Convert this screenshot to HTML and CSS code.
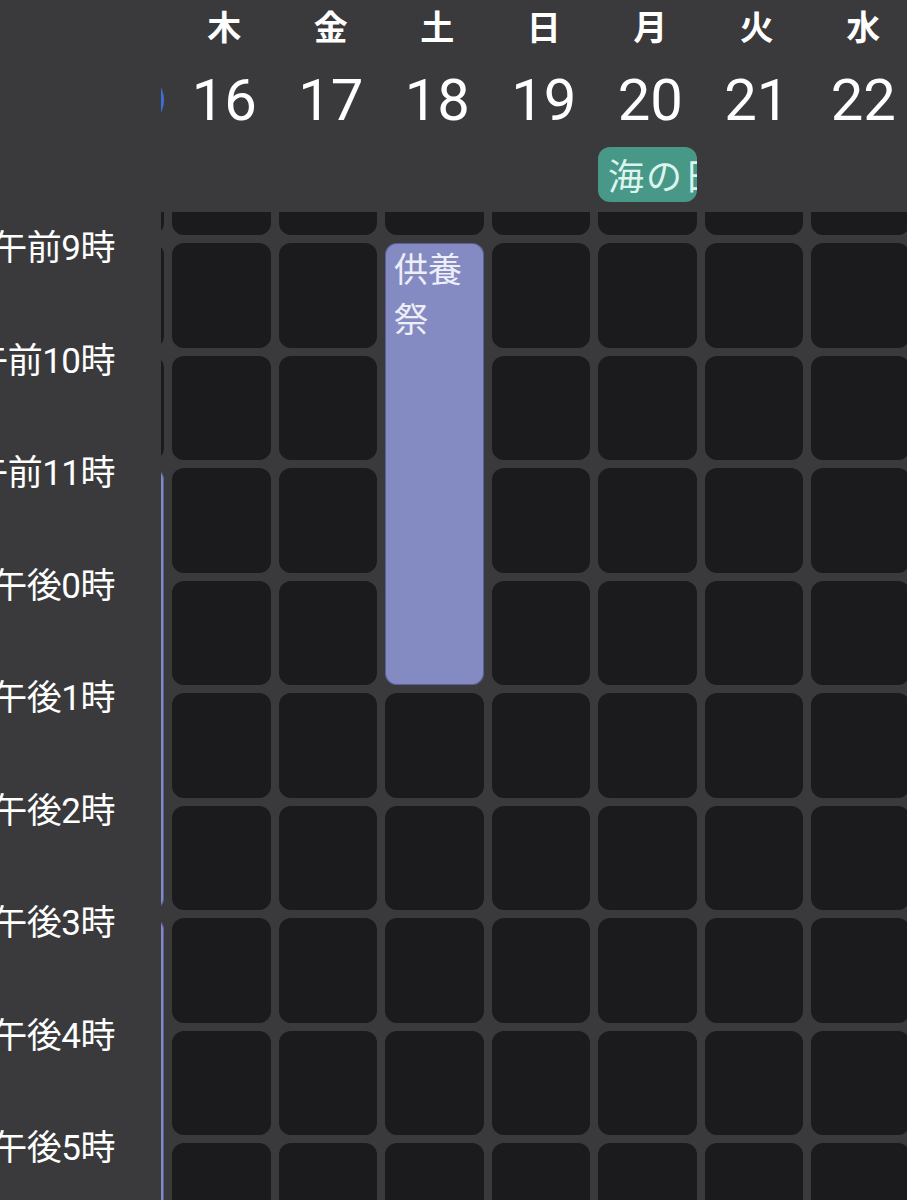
FILE: index.html
```html
<!DOCTYPE html>
<html lang="ja">
<head>
  <meta charset="UTF-8">
  <meta name="viewport" content="width=device-width, initial-scale=1.0">
  <title>週表示</title>
  <link rel="stylesheet" href="styles.css">
</head>
<body>
  <div class="cal">
    <div class="head">
      <div class="days">
        <!-- 15 (today) sits under the time gutter, only the pill edge shows -->
        <div class="day">
          <div class="dow"></div>
          <div class="date"><span class="today"></span></div>
          <div class="allday"></div>
        </div>
        <div class="day">
          <div class="dow">木</div>
          <div class="date">16</div>
          <div class="allday"></div>
        </div>
        <div class="day">
          <div class="dow">金</div>
          <div class="date">17</div>
          <div class="allday"></div>
        </div>
        <div class="day">
          <div class="dow">土</div>
          <div class="date">18</div>
          <div class="allday"></div>
        </div>
        <div class="day">
          <div class="dow">日</div>
          <div class="date">19</div>
          <div class="allday"></div>
        </div>
        <div class="day">
          <div class="dow">月</div>
          <div class="date">20</div>
          <div class="allday">
            <div class="holiday">海の日</div>
          </div>
        </div>
        <div class="day">
          <div class="dow">火</div>
          <div class="date">21</div>
          <div class="allday"></div>
        </div>
        <div class="day">
          <div class="dow">水</div>
          <div class="date">22</div>
          <div class="allday"></div>
        </div>
      </div>
      <div class="corner"></div>
    </div>

    <div class="body">
      <div class="grid">
        <!-- events first, slots flow around them -->
        <div class="event ev-kuyo">供養祭</div>
        <div class="event ev-a"></div>
        <div class="event ev-b"></div>

        <!-- 8時 -->
        <div class="slot"></div><div class="slot"></div><div class="slot"></div><div class="slot"></div>
        <div class="slot"></div><div class="slot"></div><div class="slot"></div><div class="slot"></div>
        <!-- 9時 -->
        <div class="slot"></div><div class="slot"></div><div class="slot"></div>
        <div class="slot"></div><div class="slot"></div><div class="slot"></div><div class="slot"></div>
        <!-- 10時 -->
        <div class="slot"></div><div class="slot"></div><div class="slot"></div>
        <div class="slot"></div><div class="slot"></div><div class="slot"></div><div class="slot"></div>
        <!-- 11時 -->
        <div class="slot"></div><div class="slot"></div>
        <div class="slot"></div><div class="slot"></div><div class="slot"></div><div class="slot"></div>
        <!-- 0時 -->
        <div class="slot"></div><div class="slot"></div>
        <div class="slot"></div><div class="slot"></div><div class="slot"></div><div class="slot"></div>
        <!-- 1時 -->
        <div class="slot"></div><div class="slot"></div><div class="slot"></div>
        <div class="slot"></div><div class="slot"></div><div class="slot"></div><div class="slot"></div>
        <!-- 2時 -->
        <div class="slot"></div><div class="slot"></div><div class="slot"></div>
        <div class="slot"></div><div class="slot"></div><div class="slot"></div><div class="slot"></div>
        <!-- 3時 -->
        <div class="slot"></div><div class="slot"></div><div class="slot"></div>
        <div class="slot"></div><div class="slot"></div><div class="slot"></div><div class="slot"></div>
        <!-- 4時 -->
        <div class="slot"></div><div class="slot"></div><div class="slot"></div>
        <div class="slot"></div><div class="slot"></div><div class="slot"></div><div class="slot"></div>
        <!-- 5時 -->
        <div class="slot"></div><div class="slot"></div><div class="slot"></div>
        <div class="slot"></div><div class="slot"></div><div class="slot"></div><div class="slot"></div>
      </div>

      <div class="times">
        <div class="times-list">
          <div class="time">午前9時</div>
          <div class="time">午前10時</div>
          <div class="time">午前11時</div>
          <div class="time">午後0時</div>
          <div class="time">午後1時</div>
          <div class="time">午後2時</div>
          <div class="time">午後3時</div>
          <div class="time">午後4時</div>
          <div class="time">午後5時</div>
        </div>
      </div>
    </div>
  </div>
</body>
</html>
```

FILE: styles.css
```css
body {
  margin: 0;
  background: #3a3a3c;
  color: #fff;
  font-family: Roboto, "Noto Sans CJK JP", sans-serif;
}

.cal {
  width: 907px;
  height: 1200px;
  overflow: hidden;
  position: relative;
}

/* header */
.head {
  position: relative;
  height: 212px;
}

.days {
  display: grid;
  grid-template-columns: repeat(8, 98.5px);
  column-gap: 8px;
  padding-left: 65.5px;
}

.day {
  display: flex;
  flex-direction: column;
  min-width: 0;
}

.dow {
  height: 56px;
  line-height: 56px;
  text-align: center;
  padding-left: 6px;
  font-size: 34px;
  font-weight: 700;
}

.date {
  height: 88px;
  display: flex;
  align-items: center;
  justify-content: center;
  padding-left: 6px;
  font-size: 58px;
}

.today {
  display: block;
  width: 92px;
  height: 56px;
  border-radius: 28px;
  background: #3d6fd8;
}

.allday {
  padding-top: 3px;
}

.holiday {
  height: 55px;
  line-height: 55px;
  padding-left: 10px;
  border-radius: 12px;
  background: #489888;
  color: #dcf4ee;
  font-family: "Noto Sans CJK JP", sans-serif;
  font-size: 36px;
  letter-spacing: 2px;
  white-space: nowrap;
  overflow: hidden;
}

.corner {
  position: absolute;
  left: 0;
  top: 0;
  bottom: 0;
  width: 161px;
  background: #3a3a3c;
}

/* time grid */
.body {
  position: relative;
  height: 988px;
  overflow: hidden;
}

.grid {
  display: grid;
  grid-template-columns: repeat(8, 98.5px);
  grid-auto-rows: 104.5px;
  gap: 8px;
  padding-left: 65.5px;
  margin-top: -81.5px;
}

.slot {
  background: #1b1b1d;
  border-radius: 12px;
}

.event {
  background: #848ac2;
  border-radius: 12px;
  box-shadow: inset 0 0 0 1px rgba(40, 44, 110, 0.45);
  color: #eeeef8;
  font-family: "Noto Sans CJK JP", sans-serif;
  font-size: 34px;
  line-height: 50px;
  padding: 0 6px 0 9px;
}

.ev-kuyo {
  grid-column: 4;
  grid-row: 2 / span 4;
}

.ev-a {
  grid-column: 1;
  grid-row: 4 / span 4;
}

.ev-b {
  grid-column: 1;
  grid-row: 8 / span 3;
}

.times {
  position: absolute;
  left: 0;
  top: 0;
  bottom: 0;
  width: 161px;
  background: #3a3a3c;
}

.times-list {
  margin-top: 17px;
}

.time {
  height: 112.5px;
  display: flex;
  justify-content: flex-end;
  padding-right: 46px;
  font-size: 35px;
  line-height: 40px;
  letter-spacing: -0.5px;
  white-space: nowrap;
}
```
